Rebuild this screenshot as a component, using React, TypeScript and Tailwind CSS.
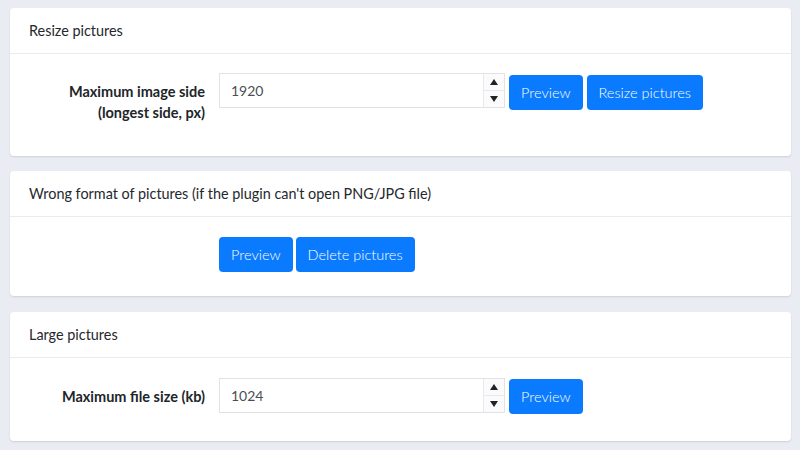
import React from "react";

function NumberField({ value }: { value: string }) {
  return (
    <div className="flex h-[35px] w-[286px] border border-[#dfe3e8] bg-white">
      <input
        type="text"
        defaultValue={value}
        className="min-w-0 flex-1 px-[11px] text-[14px] text-[#4a4f55] outline-none"
      />
      <div className="flex w-[21px] flex-col border-l border-[#e6e9ed] bg-[#fbfbfb]">
        <div className="flex flex-1 items-center justify-center border-b border-[#e6e9ed]">
          <svg width="8" height="6" viewBox="0 0 8 6">
            <path d="M4 0 L8 6 L0 6 Z" fill="#222" />
          </svg>
        </div>
        <div className="flex flex-1 items-center justify-center">
          <svg width="8" height="6" viewBox="0 0 8 6">
            <path d="M0 0 L8 0 L4 6 Z" fill="#222" />
          </svg>
        </div>
      </div>
    </div>
  );
}

function Btn({ children }: { children: React.ReactNode }) {
  return (
    <button className="h-[35px] rounded-[4px] bg-[#0a7bff] px-[12px] text-[14.5px] font-light text-white">
      {children}
    </button>
  );
}

function Card({
  title,
  className = "",
  children,
}: {
  title: string;
  className?: string;
  children: React.ReactNode;
}) {
  return (
    <div className={`rounded-[4px] bg-white shadow-[0_1px_2px_rgba(0,0,0,0.12)] ${className}`}>
      <div className="flex h-[46px] items-center border-b border-[#e9ecef] px-[19px] text-[14.4px] text-[#25282c]">
        {title}
      </div>
      {children}
    </div>
  );
}

export default function App() {
  return (
    <div
      className="flex h-[450px] w-[800px] flex-col gap-[15px] bg-[#e9edf3] pl-[10px] pr-[9px] pt-[8px]"
      style={{ fontFamily: "Lato, 'Open Sans', sans-serif" }}
    >
      <Card title="Resize pictures">
        <div className="flex items-start px-[20px] pb-[33px] pt-[19px]">
          <div className="w-[175px] pt-[8px] text-right text-[14.5px] font-bold leading-[21px] text-[#212529]">
            Maximum image side
            <br />
            (longest side, px)
          </div>
          <div className="ml-[14px] flex items-start gap-[4px]">
            <NumberField value="1920" />
            <div className="mt-[2px] flex gap-[4px]">
              <Btn>Preview</Btn>
              <Btn>Resize pictures</Btn>
            </div>
          </div>
        </div>
      </Card>

      <Card title="Wrong format of pictures (if the plugin can't open PNG/JPG file)">
        <div className="flex pb-[23px] pl-[209px] pt-[20px]">
          <div className="flex h-[36px] gap-[3px]">
            <Btn>Preview</Btn>
            <Btn>Delete pictures</Btn>
          </div>
        </div>
      </Card>

      <Card title="Large pictures" className="mt-[1px]">
        <div className="flex items-center px-[20px] pb-[27px] pt-[20px]">
          <div className="w-[175px] text-right text-[14.5px] font-bold leading-[21px] text-[#212529]">
            Maximum file size (kb)
          </div>
          <div className="ml-[14px] flex items-start gap-[4px]">
            <NumberField value="1024" />
            <div className="mt-[1px]">
              <Btn>Preview</Btn>
            </div>
          </div>
        </div>
      </Card>
    </div>
  );
}
